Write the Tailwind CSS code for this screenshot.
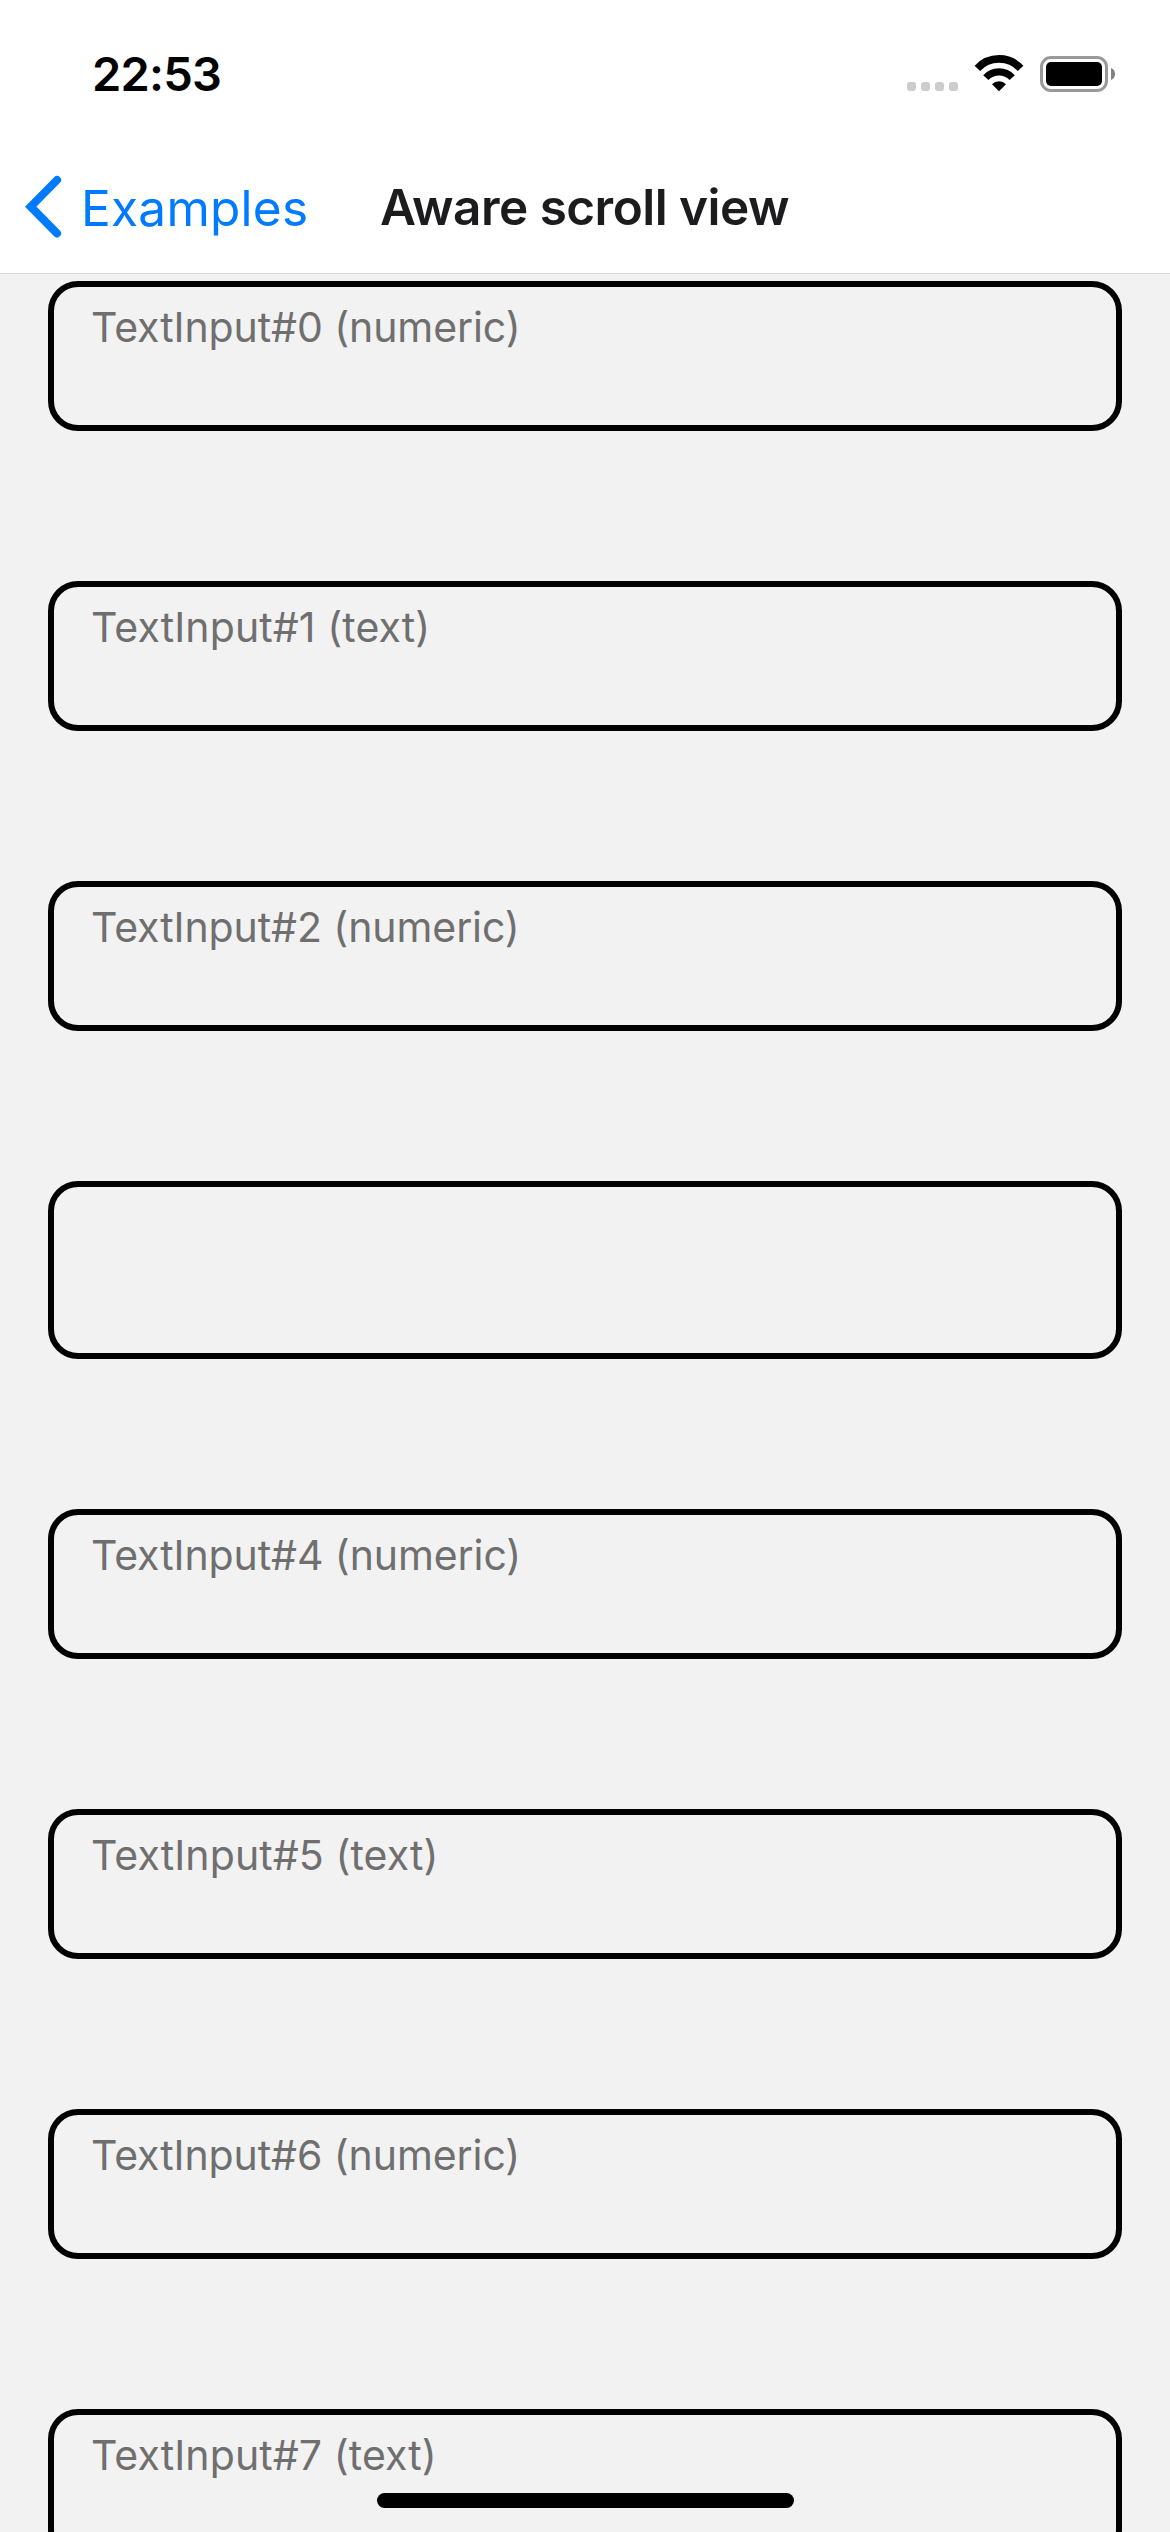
<!DOCTYPE html>
<html lang="en">
<head>
<meta charset="utf-8">
<title>Aware scroll view</title>
<script src="https://cdn.jsdelivr.net/npm/@tailwindcss/browser@4"></script>
</head>
<body class="font-['Inter',sans-serif]">
<div class="relative flex h-[2532px] w-[1170px] flex-col overflow-hidden bg-[#f2f2f2]">
  <header class="h-[274px] shrink-0 border-b border-[#d8d8d8] bg-white">
    <!-- Status bar -->
    <div class="flex h-[141px] items-start justify-between pl-[92px] pr-[54px] pt-[45px]">
      <span class="text-[47px] font-semibold leading-[57px] tracking-[-0.78px] text-black">22:53</span>
      <svg class="mt-[5px] h-[46px] w-[210px]" viewBox="906 50 210 46" fill="none">
        <g fill="#cccccc">
          <rect x="907" y="82" width="9" height="9" rx="3"/>
          <rect x="921" y="82" width="9" height="9" rx="3"/>
          <rect x="935" y="82" width="9" height="9" rx="3"/>
          <rect x="949" y="82" width="9" height="9" rx="3"/>
        </g>
        <path d="M977.4 68.4A29.3 29.3 0 0 1 1020.6 68.4" stroke="#000" stroke-width="7.6"/>
        <path d="M985.8 77.6A18 18 0 0 1 1012.2 77.6" stroke="#000" stroke-width="7.2"/>
        <path d="M992 84.2A10 10 0 0 1 1006 84.2L999 91.2Z" fill="#000"/>
        <rect x="1041.5" y="57.5" width="65" height="33" rx="9.5" stroke="#999999" stroke-width="3"/>
        <rect x="1046" y="62" width="56" height="24" rx="5" fill="#000"/>
        <path d="M1111 68C1113.6 69 1115 71.3 1115 74S1113.6 79 1111 80Z" fill="#808080"/>
      </svg>
    </div>
    <!-- Navigation bar -->
    <div class="flex items-start pl-[25px] pt-[34px]">
      <svg class="h-[64px] w-[37px]" viewBox="0 0 37 64" fill="none">
        <path d="M32 5L5.7 31.7L32 58.4" stroke="#007aff" stroke-width="8.1" stroke-linecap="round"/>
      </svg>
      <span class="ml-[19px] mt-[3px] w-[299px] text-[49.5px] leading-[60px] tracking-[0.27px] text-[#007aff]">Examples</span>
      <h1 class="mt-[2px] whitespace-nowrap text-[49.5px] font-semibold leading-[60px] tracking-[-0.53px] text-[#1c1c1e]">Aware scroll view</h1>
    </div>
  </header>
  <main class="flex flex-col gap-[150px] px-12 pt-[7px] text-[41px] leading-[50px] text-[#6f6f6f]">
    <div class="h-[150px] shrink-0 rounded-[30px] border-6 border-black pl-[37px] pt-[15px] tracking-[-0.085px]">TextInput#0 (numeric)</div>
    <div class="h-[150px] shrink-0 rounded-[30px] border-6 border-black pl-[37px] pt-[15px] tracking-[0.1px]">TextInput#1 (text)</div>
    <div class="h-[150px] shrink-0 rounded-[30px] border-6 border-black pl-[37px] pt-[15px] tracking-[-0.085px]">TextInput#2 (numeric)</div>
    <div class="h-[178px] shrink-0 rounded-[30px] border-6 border-black"></div>
    <div class="h-[150px] shrink-0 rounded-[30px] border-6 border-black pl-[37px] pt-[15px] tracking-[-0.085px]">TextInput#4 (numeric)</div>
    <div class="h-[150px] shrink-0 rounded-[30px] border-6 border-black pl-[37px] pt-[15px] tracking-[0.1px]">TextInput#5 (text)</div>
    <div class="h-[150px] shrink-0 rounded-[30px] border-6 border-black pl-[37px] pt-[15px] tracking-[-0.085px]">TextInput#6 (numeric)</div>
    <div class="h-[150px] shrink-0 rounded-[30px] border-6 border-black pl-[37px] pt-[15px] tracking-[0.1px]">TextInput#7 (text)</div>
  </main>
  <!-- Home indicator -->
  <div class="absolute bottom-[24px] left-[377px] h-[15px] w-[417px] rounded-full bg-black"></div>
</div>
</body>
</html>
